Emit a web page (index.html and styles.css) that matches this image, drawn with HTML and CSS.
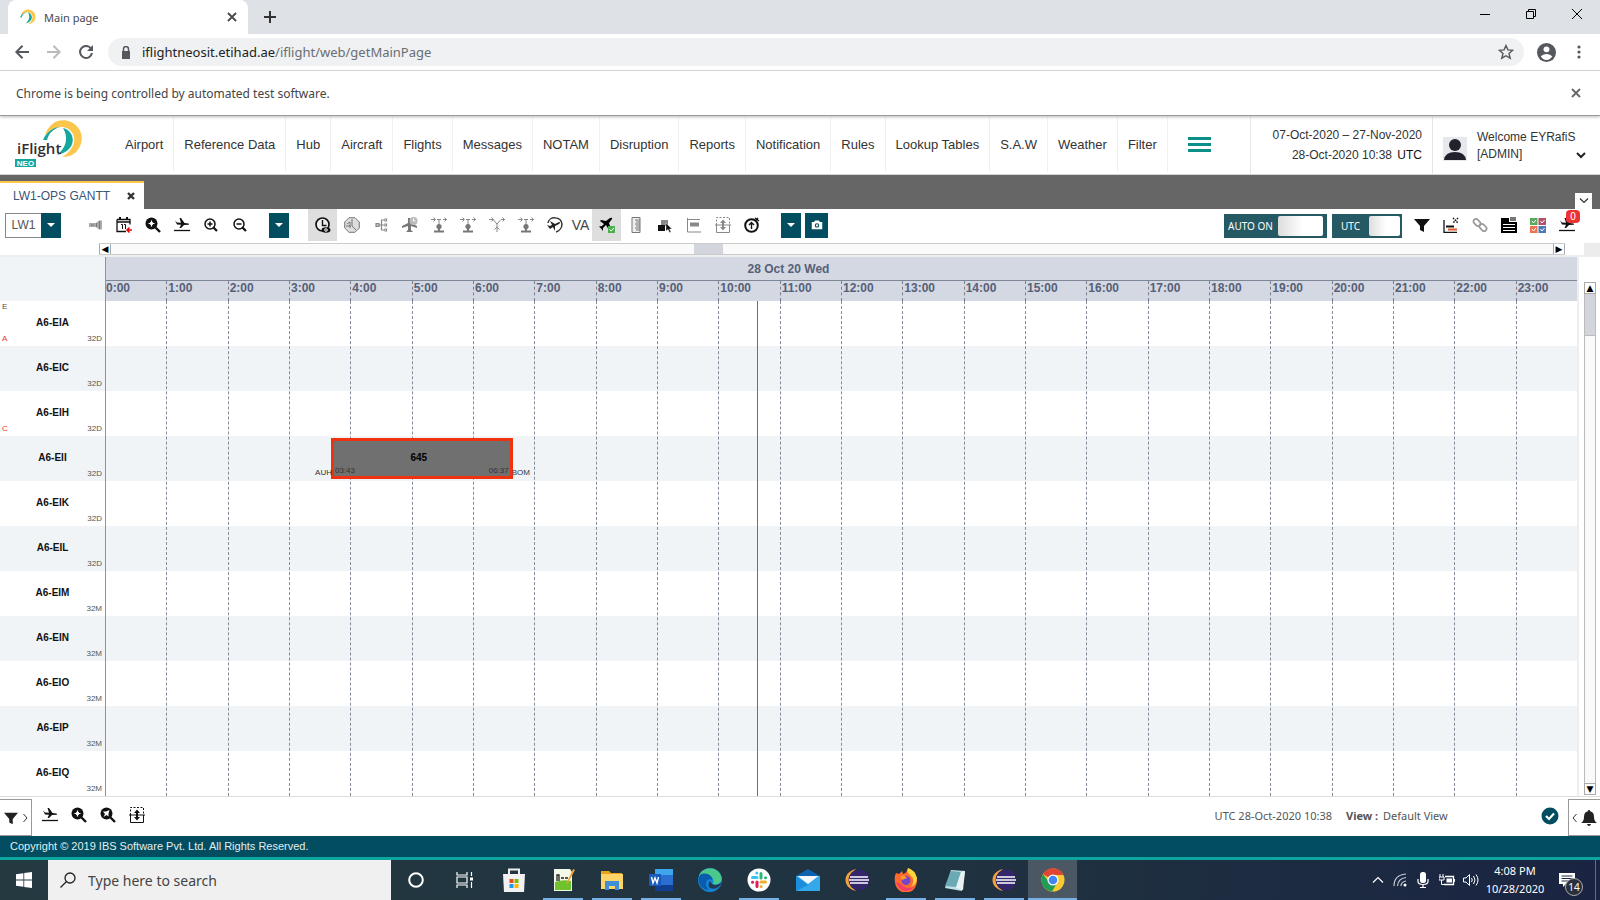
FILE: index.html
```html
<!DOCTYPE html>
<html lang="en">
<head>
<meta charset="utf-8">
<title>Main page</title>
<link rel="stylesheet" href="styles.css">
</head>
<body>
<svg class="defs" aria-hidden="true">
  <symbol id="swirl" viewBox="0 0 40 40"><path fill="#fbc64b" d="M2 17C5 4 17-2 28 3c13 6 14 22 4 31-4 3-9 4-13 4 9-5 15-15 11-23C25 6 12 5 2 17z"/><path fill="#14a79d" d="M0 21C4 12 11 8 17 8 10 10 6 14 4 21zM20 9c13 3 15 23-6 27 9-7 12-17 6-27z"/></symbol>
  <symbol id="x" viewBox="0 0 10 10"><path d="M1 1l8 8M9 1L1 9" fill="none" stroke="currentColor" stroke-width="1.8"/></symbol>
  <symbol id="caret" viewBox="0 0 10 6"><path d="M1 1h8L5 5z" fill="currentColor"/></symbol>
  <symbol id="chev" viewBox="0 0 10 7"><path d="M1 1l4 4 4-4" fill="none" stroke="currentColor" stroke-width="1.2"/></symbol>
  <symbol id="torch" viewBox="0 0 16 16"><path d="M2 6h7l3-2.500h3v9h-3L9 10H2z" fill="#aaa"/><path d="M9.500 6v4M4 8h3M12.500 4v8" stroke="#777" fill="none"/></symbol>
  <symbol id="cal" viewBox="0 0 16 16"><path d="M1 2.500h13v5M10 14.500H1v-12M1 5h13" fill="none" stroke="#111" stroke-width="1.300"/><path d="M4 0v3M11 0v3" stroke="#111" stroke-width="2"/><path d="M5 7.500h1.500V12M8 7.500h1.500V12" fill="none" stroke="#111"/><path d="M16 13h-5M13.500 10.500L11 13l2.500 2.500" fill="none" stroke="#e00" stroke-width="1.500"/></symbol>
  <symbol id="zoomp" viewBox="0 0 16 16"><circle cx="6.500" cy="6.500" r="6" fill="#111"/><path d="M10.500 10.500l4.500 4.500" stroke="#111" stroke-width="2.400"/><path d="M6.500 3.500v6M3.500 6.500h6" stroke="#fff" stroke-width="1.200"/><circle cx="6.500" cy="6.500" r="1.800" fill="#fff"/></symbol>
  <symbol id="zoomplane" viewBox="0 0 16 16"><circle cx="6.500" cy="6.500" r="6" fill="#111"/><path d="M10.500 10.500l4.500 4.500" stroke="#111" stroke-width="2.400"/><path d="M3 4.500h3L9.500 3 8.500 6.500v3L6.500 8l-3 2L5 7z" fill="#fff"/></symbol>
  <symbol id="takeoff" viewBox="0 0 16 16"><path d="M1 3.500l2 2 4 .3L5.500 1H7l3.500 5 4 .4q1.500.8 0 1.400L10 8l-3 3H5.500L7 7.700l-4-.2z" fill="#111"/><path d="M0 13.500h16" stroke="#111" stroke-width="1.300"/></symbol>
  <symbol id="zin" viewBox="0 0 16 16"><circle cx="7" cy="7" r="5" fill="none" stroke="#111" stroke-width="1.500"/><path d="M10.500 10.500L14 14" stroke="#111" stroke-width="2.200"/><path d="M7 4.500v5M4.500 7h5" stroke="#111" stroke-width="1.500"/></symbol>
  <symbol id="zout" viewBox="0 0 16 16"><circle cx="7" cy="7" r="5" fill="none" stroke="#111" stroke-width="1.500"/><path d="M10.500 10.500L14 14" stroke="#111" stroke-width="2.200"/><path d="M4.500 7h5" stroke="#111" stroke-width="1.500"/></symbol>
  <symbol id="clock" viewBox="0 0 16 16"><circle cx="7.500" cy="7.500" r="6.500" fill="#eee" stroke="#111" stroke-width="1.700"/><path d="M7.500 3v5.500h4" fill="none" stroke="#111" stroke-width="1.400"/><ellipse cx="11" cy="13" rx="4.500" ry="2.800" fill="#111"/><circle cx="11" cy="13" r="1.300" fill="none" stroke="#fff"/></symbol>
  <symbol id="octo" viewBox="0 0 16 16"><path d="M5 .7h6L15.300 5v6L11 15.300H5L.7 11V5z" fill="#ddd" stroke="#777"/><path d="M8 2v7l4 4M3 7l3-2v6M2 9h5" fill="none" stroke="#777"/></symbol>
  <symbol id="tree" viewBox="0 0 16 16"><path d="M3 8h6M12 3H8.500v10H12M8 8h4M11.500 2h2v2h-2M11.500 7h2v2h-2M11.500 12h2v2h-2M3 6.500h3v3H3z" fill="none" stroke="#888" stroke-width="1.200"/></symbol>
  <symbol id="planeclk" viewBox="0 0 16 16"><path d="M6 1h2l1 5 6 3v2l-6-2v4l2 2H4l2-2V9l-6 2V9l6-3z" fill="#777"/><circle cx="11.500" cy="4" r="4" fill="#bbb"/><path d="M11.500 1.500V4h2" fill="none" stroke="#fff"/></symbol>
  <symbol id="fork" viewBox="0 0 16 16"><path d="M0 2.500h4M2.500.5l2 2-2 2M6 2.500h4M12 2.500h4M13.500.5l2 2-2 2M8 3v5" fill="none" stroke="#888"/><circle cx="8" cy="9.500" r="2.600" fill="#777"/><path d="M7 10h2v3.500h4v2H3v-2h4z" fill="#777"/></symbol>
  <symbol id="fork2" viewBox="0 0 16 16"><path d="M0 2.500h4M2.500.5l2 2-2 2M12 2.500h4M13.500.5l2 2-2 2M4.500 3L8 7l3.500-4M8 7v8M5.500 12.500L8 10l2.500 2.500" fill="none" stroke="#888"/></symbol>
  <symbol id="roundplane" viewBox="0 0 16 16"><path d="M1 6C2-1 14-1 15 7c0 4-3 7-6 8" fill="none" stroke="#333" stroke-width="1.500"/><path d="M0 8l3 1 2-1-2-4 5 3 4-2q2 0 0 2l-4 2v5l-2-4-3 2z" fill="#222"/></symbol>
  <symbol id="planeok" viewBox="0 0 16 16"><path d="M2 3l5 1 4-3q3-1 2 1l-3 4 2 6-2 1-3-5-3 3v3l-1.500-2L0 9.500 3 9l2-2-4-3z" fill="#000"/><path d="M9 9h7v7H9z" fill="#4caf50"/><path d="M10.500 12.500l1.500 1.500 3-3" fill="none" stroke="#fff"/></symbol>
  <symbol id="ruler" viewBox="0 0 16 16"><path d="M4 .5h8v15H4zM7 3h5M8 5h4M7 7h5M8 9h4M7 11h5M8 13h4" fill="#eee" stroke="#777"/></symbol>
  <symbol id="cubes" viewBox="0 0 16 16"><path d="M4 3h7v6H4z" fill="#888"/><path d="M1 8h7v6H1z" fill="#111"/><path d="M9 6l6 6h-2.500l1.500 3-1.500.5L11 12.500 9 14z" fill="#111" stroke="#fff" stroke-width=".4"/></symbol>
  <symbol id="align" viewBox="0 0 16 16"><path d="M1.500 1v14H15M2 2.500h12" fill="none" stroke="#888"/><path d="M4 5.500h9v4H4z" fill="#888"/></symbol>
  <symbol id="expand" viewBox="0 0 16 16"><path d="M1.500 15.500h13M1.500 8v7.500M14.500 8v7.500M0 8h16" fill="none" stroke="currentColor"/><path d="M1.500 8V.5h13V8" fill="none" stroke="currentColor" stroke-dasharray="2 1.500"/><path d="M8 2.500L11 6H9v4h2l-3 3.500L5 10h2V6H5z" fill="currentColor"/></symbol>
  <symbol id="timer" viewBox="0 0 16 16"><circle cx="7.500" cy="8.500" r="6.300" fill="none" stroke="#111" stroke-width="2"/><path d="M7.500 12V5.500M5 8l2.500-2.500L10 8M11 1l4 3M12 3l2-2" fill="none" stroke="#111" stroke-width="1.400"/></symbol>
  <symbol id="camera" viewBox="0 0 16 14"><path d="M1 3h3l1.500-2h5L12 3h3v9.500H1z" fill="#fff"/><circle cx="8" cy="7.500" r="2.200" fill="none" stroke="#024d5f" stroke-width="1.500"/></symbol>
  <symbol id="funnel" viewBox="0 0 16 16"><path d="M0 2h16L10 9v6l-4-2V9z" fill="currentColor"/></symbol>
  <symbol id="chart" viewBox="0 0 16 16"><path d="M1 3v12.300H14" fill="none" stroke="#111" stroke-width="1.300"/><path d="M3 9.500h8" stroke="#111" stroke-width="2"/><path d="M5 12.500h9" stroke="#e2572b" stroke-width="2"/><path d="M10 1l5 5M15 1l-5 5" stroke="#111" stroke-dasharray="1.500 1" stroke-width="1.500"/></symbol>
  <symbol id="link" viewBox="0 0 16 16"><g fill="none" stroke="#999" stroke-width="1.700"><rect x="1" y="3" width="8" height="5" rx="2.500" transform="rotate(45 5 5.500)"/><rect x="7" y="8" width="8" height="5" rx="2.500" transform="rotate(45 11 10.500)"/></g></symbol>
  <symbol id="doc" viewBox="0 0 16 16"><path d="M0 1h8v4h8v11H0z" fill="#000"/><path d="M9 0h6v4H9z" fill="#777"/><path d="M2 7.500h12M2 10.500h12M2 13.500h12" stroke="#fff"/></symbol>
  <symbol id="four" viewBox="0 0 16 16"><path d="M0 1h7.500v7H0z" fill="#59a85c"/><path d="M8.500 1H16v7H8.500z" fill="#b5506a"/><path d="M0 9h7.500v7H0z" fill="#ec7352"/><path d="M8.500 9H16v7H8.500z" fill="#4e79b8"/><path d="M2 4l1.500 2L6 3M10.500 4L12 6l2.500-3M2 12l1.500 2L6 11M10.500 12l1.500 2 2.500-3" fill="none" stroke="#fff"/></symbol>
  <symbol id="eclipse" viewBox="0 0 24 24"><path d="M11 1C-3 4-3 20 11 23 3 17 3 7 11 1z" fill="#f2a23a"/><circle cx="14" cy="12" r="10.500" fill="#33266b"/><path d="M5 9h18M4 12h20M5 15h18" stroke="#fff" stroke-width="1.500"/></symbol>
</svg>

<header class="tabstrip">
  <div class="btab"><svg class="i16"><use href="#swirl"/></svg><span class="grow">Main page</span><button class="plain" aria-label="Close tab"><svg class="i10"><use href="#x"/></svg></button></div>
  <button class="plain newtab" aria-label="New tab"><svg class="i12" viewBox="0 0 12 12"><path d="M6 0v12M0 6h12" stroke="#333" stroke-width="2"/></svg></button>
  <div class="wincontrols">
    <button class="plain" aria-label="Minimize"><svg class="i10" viewBox="0 0 10 10"><path d="M0 5.500h10" stroke="#000"/></svg></button>
    <button class="plain" aria-label="Restore"><svg class="i10" viewBox="0 0 10 10"><path d="M.5 2.500h7v7h-7zM2.500 2.500v-2h7v7h-2" fill="none" stroke="#000"/></svg></button>
    <button class="plain" aria-label="Close"><svg class="i10" viewBox="0 0 10 10"><path d="M0 0l10 10M10 0L0 10" stroke="#000"/></svg></button>
  </div>
</header>
<div class="addressbar">
  <button class="plain" aria-label="Back"><svg class="i14" viewBox="0 0 14 14"><path d="M14 7H1M7.500.8L1.300 7l6.200 6.200" fill="none" stroke="#55585c" stroke-width="2"/></svg></button>
  <button class="plain" aria-label="Forward"><svg class="i14" viewBox="0 0 14 14"><path d="M0 7h13M6.500.8L12.700 7l-6.200 6.200" fill="none" stroke="#bbb" stroke-width="2"/></svg></button>
  <button class="plain" aria-label="Reload"><svg class="i14" viewBox="0 0 14 14"><path d="M12 3.500A6 6 0 1 0 13 8" fill="none" stroke="#55585c" stroke-width="2"/><path d="M14 0v6H8z" fill="#55585c"/></svg></button>
  <div class="pill">
    <svg class="lock" viewBox="0 0 10 13"><path d="M1 5h8v8H1z" fill="#55585c"/><path d="M2.500 5.500V3a2.500 2.500 0 0 1 5 0v2.500" fill="none" stroke="#55585c" stroke-width="1.500"/></svg>
    <span class="grow url"><b>iflightneosit.etihad.ae</b>/iflight/web/getMainPage</span>
    <button class="plain" aria-label="Bookmark"><svg class="i16" viewBox="0 0 16 16"><path d="M8 1.500l1.900 4.400 4.800.4L11 9.500l1.200 4.700L8 11.700l-4.200 2.500L5 9.500 1.300 6.300l4.800-.4z" fill="none" stroke="#55585c" stroke-width="1.400"/></svg></button>
  </div>
  <button class="plain" aria-label="Profile"><svg class="i18" viewBox="0 0 18 18"><circle cx="9" cy="9" r="9" fill="#55585c"/><circle cx="9" cy="6" r="2.800" fill="#fff"/><path d="M3.500 12.500q5.500-4 11 0-2 3.500-5.500 3.500t-5.500-3.500z" fill="#fff"/></svg></button>
  <button class="plain" aria-label="Menu"><svg class="dots" viewBox="0 0 4 14"><circle cx="2" cy="2" r="1.600" fill="#55585c"/><circle cx="2" cy="7" r="1.600" fill="#55585c"/><circle cx="2" cy="12" r="1.600" fill="#55585c"/></svg></button>
</div>
<div class="infobar"><span class="grow">Chrome is being controlled by automated test software.</span><button class="plain grey" aria-label="Dismiss"><svg class="i10"><use href="#x"/></svg></button></div>

<div class="apphead">
  <a class="logo" href="#" aria-label="iFlight NEO"><svg class="swirl"><use href="#swirl"/></svg><span class="brand">iFlight</span><span class="neo">NEO</span></a>
  <nav class="menu">
    <a href="#">Airport</a><a href="#">Reference Data</a><a href="#">Hub</a><a href="#">Aircraft</a><a href="#">Flights</a><a href="#">Messages</a><a href="#">NOTAM</a><a href="#">Disruption</a><a href="#">Reports</a><a href="#">Notification</a><a href="#">Rules</a><a href="#">Lookup Tables</a><a href="#">S.A.W</a><a href="#">Weather</a><a href="#">Filter</a>
  </nav>
  <button class="plain burger" aria-label="More"><svg viewBox="0 0 23 15"><path d="M0 1.500h23M0 7.500h23M0 13.500h23" stroke="#0d8f89" stroke-width="3"/></svg></button>
  <div class="dates"><span>07-Oct-2020 – 27-Nov-2020</span><span>28-Oct-2020 10:38 <b>UTC</b></span></div>
  <div class="user">
    <svg class="avatar" viewBox="0 0 24 24"><path d="M0 0h24v24H0z" fill="#e6e8ec"/><circle cx="12" cy="8" r="6" fill="#22222c"/><path d="M1 23q1-8 11-8t11 8z" fill="#22222c"/></svg>
    <span class="grow">Welcome EYRafiS<br>[ADMIN]</span>
    <svg class="userchev" viewBox="0 0 10 7"><path d="M1 1l4 4 4-4" fill="none" stroke="#222" stroke-width="2"/></svg>
  </div>
</div>
<div class="pagetabs">
  <div class="ptab"><span class="grow">LW1-OPS GANTT</span><button class="plain" aria-label="Close"><svg class="i8" viewBox="0 0 8 8"><path d="M1 1l6 6M7 1L1 7" stroke="#333" stroke-width="2.400"/></svg></button></div>
  <button class="plain tablist" aria-label="Tab list"><svg class="i10"><use href="#chev"/></svg></button>
</div>

<div class="tools">
  <div class="combo"><span>LW1</span><button class="drop" aria-label="Choose"><svg class="i10c"><use href="#caret"/></svg></button></div>
  <div class="group">
    <button class="tool" aria-label="Torch"><svg><use href="#torch"/></svg></button><button class="tool" aria-label="Calendar"><svg><use href="#cal"/></svg></button><button class="tool" aria-label="Find"><svg><use href="#zoomp"/></svg></button><button class="tool" aria-label="Flight"><svg><use href="#takeoff"/></svg></button><button class="tool" aria-label="Zoom in"><svg><use href="#zin"/></svg></button><button class="tool" aria-label="Zoom out"><svg><use href="#zout"/></svg></button>
  </div>
  <button class="drop mid" aria-label="Zoom options"><svg class="i10c"><use href="#caret"/></svg></button>
  <div class="group">
    <button class="tool on" aria-label="Time"><svg><use href="#clock"/></svg></button><button class="tool" aria-label="Delay"><svg><use href="#octo"/></svg></button><button class="tool" aria-label="Tree"><svg><use href="#tree"/></svg></button><button class="tool" aria-label="Aircraft time"><svg><use href="#planeclk"/></svg></button><button class="tool" aria-label="Crew"><svg><use href="#fork"/></svg></button><button class="tool" aria-label="Crew link"><svg><use href="#fork"/></svg></button><button class="tool" aria-label="Merge"><svg><use href="#fork2"/></svg></button><button class="tool" aria-label="Passenger"><svg><use href="#fork"/></svg></button><button class="tool" aria-label="Rotation"><svg><use href="#roundplane"/></svg></button><button class="tool va">VA</button><button class="tool on" aria-label="Check flight"><svg><use href="#planeok"/></svg></button><button class="tool" aria-label="Ruler"><svg><use href="#ruler"/></svg></button><button class="tool" aria-label="Blocks"><svg><use href="#cubes"/></svg></button><button class="tool" aria-label="Align"><svg><use href="#align"/></svg></button><button class="tool pale" aria-label="Row height"><svg><use href="#expand"/></svg></button><button class="tool" aria-label="Timer"><svg><use href="#timer"/></svg></button>
  </div>
  <button class="drop end" aria-label="Options"><svg class="i10c"><use href="#caret"/></svg></button>
  <button class="drop cam" aria-label="Snapshot"><svg class="i12"><use href="#camera"/></svg></button>
  <div class="grow"></div>
  <button class="switch auto"><span>AUTO ON</span><i></i></button>
  <button class="switch utc"><span>UTC</span><i></i></button>
  <div class="group">
    <button class="tool" aria-label="Filter"><svg><use href="#funnel"/></svg></button><button class="tool" aria-label="Chart"><svg><use href="#chart"/></svg></button><button class="tool" aria-label="Link"><svg><use href="#link"/></svg></button><button class="tool" aria-label="Report"><svg><use href="#doc"/></svg></button><button class="tool" aria-label="Legend"><svg><use href="#four"/></svg></button><button class="tool" aria-label="Alerts"><svg><use href="#takeoff"/></svg><span class="badge">0</span></button>
  </div>
</div>

<div class="hscroll"><div class="track"><span class="arrow">◀</span><div class="rail"><div class="thumb"></div></div><span class="arrow">▶</span></div><div class="corner"></div></div>

<main class="gantt">
  <div class="chart">
    <div class="ghead">
      <div class="gcorner"></div>
      <div class="scale">
        <div class="day">28 Oct 20 Wed</div>
        <div class="hours"><span>0:00</span><span>1:00</span><span>2:00</span><span>3:00</span><span>4:00</span><span>5:00</span><span>6:00</span><span>7:00</span><span>8:00</span><span>9:00</span><span>10:00</span><span>11:00</span><span>12:00</span><span>13:00</span><span>14:00</span><span>15:00</span><span>16:00</span><span>17:00</span><span>18:00</span><span>19:00</span><span>20:00</span><span>21:00</span><span>22:00</span><span>23:00</span></div>
      </div>
    </div>
    <div class="gbody">
      <div class="rows">
        <div class="row"><div class="ac"><small class="tl">E</small><small class="bl">A</small><b>A6-EIA</b><small class="br">32D</small></div></div>
        <div class="row"><div class="ac"><b>A6-EIC</b><small class="br">32D</small></div></div>
        <div class="row"><div class="ac"><small class="bl">C</small><b>A6-EIH</b><small class="br">32D</small></div></div>
        <div class="row"><div class="ac"><b>A6-EII</b><small class="br">32D</small></div></div>
        <div class="row"><div class="ac"><b>A6-EIK</b><small class="br">32D</small></div></div>
        <div class="row"><div class="ac"><b>A6-EIL</b><small class="br">32D</small></div></div>
        <div class="row"><div class="ac"><b>A6-EIM</b><small class="br">32M</small></div></div>
        <div class="row"><div class="ac"><b>A6-EIN</b><small class="br">32M</small></div></div>
        <div class="row"><div class="ac"><b>A6-EIO</b><small class="br">32M</small></div></div>
        <div class="row"><div class="ac"><b>A6-EIP</b><small class="br">32M</small></div></div>
        <div class="row"><div class="ac"><b>A6-EIQ</b><small class="br">32M</small></div></div>
      </div>
      <div class="plot">
        <div class="lines"><i></i><i></i><i></i><i></i><i></i><i></i><i></i><i></i><i></i><i></i><i></i><i></i><i></i><i></i><i></i><i></i><i></i><i></i><i></i><i></i><i></i><i></i><i></i><i></i></div>
        <div class="now" style="left:44.3%"></div>
        <div class="flight" style="left:15.35%;width:12.35%;top:27.7%"><small class="dep">AUH</small><small class="t1">03:43</small><b>645</b><small class="t2">06:37</small><small class="arr">BOM</small></div>
      </div>
    </div>
  </div>
  <div class="vscroll"><span class="arrow">▲</span><div class="vrail"><div class="vthumb"></div></div><span class="arrow">▼</span></div>
</main>

<div class="status">
  <button class="side left" aria-label="Filter panel"><svg class="i14"><use href="#funnel"/></svg><svg class="angle" viewBox="0 0 5 10"><path d="M.5 1L4 5 .5 9" fill="none" stroke="#333"/></svg></button>
  <div class="group"><button class="tool" aria-label="Flight"><svg><use href="#takeoff"/></svg></button><button class="tool" aria-label="Find"><svg><use href="#zoomp"/></svg></button><button class="tool" aria-label="Find aircraft"><svg><use href="#zoomplane"/></svg></button><button class="tool" aria-label="Row height"><svg><use href="#expand"/></svg></button></div>
  <div class="grow"></div>
  <span class="stamp">UTC 28-Oct-2020 10:38</span><span class="view"><b>View :</b> Default View</span>
  <svg class="ok" viewBox="0 0 18 18"><circle cx="9" cy="9" r="8.500" fill="#024d5f"/><path d="M5 9l3 3 5-5.500" fill="none" stroke="#fff" stroke-width="2.200"/></svg>
  <button class="side right" aria-label="Notifications"><svg class="angle" viewBox="0 0 5 10"><path d="M4.500 1L1 5l3.500 4" fill="none" stroke="#333"/></svg><svg class="i16" viewBox="0 0 16 16"><path d="M8 0q1.200 0 1.200 1.200Q13 2 13 7q0 4 3 6H0q3-2 3-6 0-5 3.800-5.800Q6.800 0 8 0zM6 14h4q-.5 2-2 2t-2-2z" fill="#222"/></svg></button>
</div>
<footer class="copy">Copyright © 2019 IBS Software Pvt. Ltd. All Rights Reserved.</footer>

<div class="taskbar">
  <button class="plain start" aria-label="Start"><svg class="i16" viewBox="0 0 16 16"><path d="M0 2.200L7.400 1.200v6.400H0zM8.200 1L16 0v7.600H8.200zM0 8.400h7.400v6.400L0 13.800zM8.200 8.400H16V16l-7.800-1z" fill="#fff"/></svg></button>
  <label class="search"><svg class="i16" viewBox="0 0 16 16"><circle cx="10" cy="6" r="5" fill="none" stroke="#222" stroke-width="1.300"/><path d="M6.500 9.500L.5 15.500" stroke="#222" stroke-width="1.300"/></svg><input type="text" placeholder="Type here to search" aria-label="Search"></label>
  <div class="apps">
    <button aria-label="Cortana"><svg viewBox="0 0 24 24"><circle cx="12" cy="12" r="6.800" fill="none" stroke="#fff" stroke-width="2"/></svg></button>
    <button aria-label="Task view"><svg viewBox="0 0 24 24"><path d="M4 4v3h10V4M4 20v-3h10v3M4 9h10v6H4zM18.500 4v4M18.500 14v6" fill="none" stroke="#fff" stroke-width="1.200"/><path d="M17 9.500h3v3h-3z" fill="#fff"/></svg></button>
    <button aria-label="Store"><svg viewBox="0 0 24 24"><path d="M7 7V1.500h10V7" fill="none" stroke="#eee" stroke-width="2"/><path d="M1 6h22l-1 18H2z" fill="#f2f2f2"/><path d="M7.500 11h4v4h-4z" fill="#e74c25"/><path d="M12.500 11h4v4h-4z" fill="#7fba00"/><path d="M7.500 16h4v4h-4z" fill="#1d9ae8"/><path d="M12.500 16h4v4h-4z" fill="#fbb900"/></svg></button>
    <button class="run" aria-label="Notepad++"><svg viewBox="0 0 24 24"><path d="M3 1h16l2 3v19H3z" fill="#f4f8e8"/><path d="M4 14q8-3 16-1v9H4z" fill="#6fc22c"/><path d="M6 13V7h2v6M10 10h3M14 10h3" fill="none" stroke="#222" stroke-width="1.300"/><path d="M22 1l2 1-7 13-2 1z" fill="#e9a32d"/></svg></button>
    <button class="run" aria-label="File Explorer"><svg viewBox="0 0 24 24"><path d="M1 3h8l2 2h11v4H1z" fill="#e8a51b"/><path d="M1 6h22v15H1z" fill="#fcd467"/><path d="M5 22v-9h14v9h-4v-4H9v4z" fill="#3f8fd8"/></svg></button>
    <button class="run" aria-label="Word"><svg viewBox="0 0 24 24"><path d="M6 1h18v22H6z" fill="#2a6fd0"/><path d="M6 1h18v6H6z" fill="#41a5ee"/><path d="M6 17h18v6H6z" fill="#103f91"/><path d="M0 6h12v12H0z" fill="#185abd"/><path d="M2.500 9L4 15l2-5 2 5 1.500-6" fill="none" stroke="#fff" stroke-width="1.400"/></svg></button>
    <button aria-label="Edge"><svg viewBox="0 0 24 24"><circle cx="12" cy="12" r="12" fill="#1584d6"/><path d="M1 8C4-2 20-3 23.500 9c1 6-4 8-9 7 3-4-1-9-6-9-3 0-6 0-7.500 1z" fill="#4bc98a"/><path d="M2 7C8 3 15 8 14 12c-5-3-9 4-3 10C3 22-2 14 2 7z" fill="#0b5cad"/><path d="M14 16q5 3 10-2-4 9-12 6-3-3 0-7z" fill="#213a4d"/></svg></button>
    <button class="run" aria-label="Slack"><svg viewBox="0 0 24 24"><circle cx="12" cy="12" r="11.500" fill="#fff"/><g fill="none" stroke-width="3" stroke-linecap="round"><path d="M5.500 9.500H10M9.800 5v.1" stroke="#36c5f0"/><path d="M14 5.500V10M18.500 9.800h.1" stroke="#2eb67d"/><path d="M18.500 14H14M14.200 18.500v.1" stroke="#ecb22e"/><path d="M10 18.500V14M5.500 14.200h.1" stroke="#e01e5a"/></g></svg></button>
    <button aria-label="Mail"><svg viewBox="0 0 24 24"><path d="M0 8l12-7 12 7v2H0z" fill="#0f62ad"/><path d="M0 8h24v15H0z" fill="#35a8ea"/><path d="M1.500 8h21L12 16z" fill="#f4f8fb"/><path d="M0 8l12 9-12 6z" fill="#1b8ddb"/></svg></button>
    <button aria-label="Eclipse"><svg><use href="#eclipse"/></svg></button>
    <button class="run" aria-label="Firefox"><svg viewBox="0 0 24 24"><path d="M2 5l3 1 3-3 1 3q4-1 5-6 9 4 9 13a11 11 0 0 1-22 1Q0 9 2 5z" fill="#ff6a2f"/><path d="M14 0q-2 4 2 7 6 5 1 12 6-3 6-9Q21 2 14 0z" fill="#ffd43a"/><path d="M2 14q2 7 9 9 6 0 9-4-9 3-13-3z" fill="#f03d69"/><circle cx="12" cy="12.500" r="4.500" fill="#7546c9"/><path d="M6 9q4-3 7 1l-5 2z" fill="#ff9a30"/></svg></button>
    <button class="run" aria-label="Notepad"><svg viewBox="0 0 24 24"><path d="M8 2l14 1-3 20L2 20z" fill="#bfe0e5"/><path d="M8 3l10 1-5 15-11-1z" fill="#6ba9b5"/><path d="M18 4l4-1-2 19-7-2z" fill="#e9f1f0"/></svg></button>
    <button class="run" aria-label="Eclipse workspace"><svg><use href="#eclipse"/></svg></button>
    <button class="run active" aria-label="Chrome"><svg viewBox="0 0 24 24"><circle cx="12" cy="12" r="11.500" fill="#f9c932"/><path d="M12 12L2 6.300A11.500 11.500 0 0 1 22.500 7H12z" fill="#df4534"/><path d="M2 6.300A11.500 11.500 0 0 0 11 23.500L16 15l-8-1z" fill="#1f9d55"/><circle cx="12" cy="12" r="5.500" fill="#fff"/><circle cx="12" cy="12" r="4.300" fill="#4285f4"/></svg></button>
  </div>
  <div class="grow"></div>
  <div class="tray">
    <svg class="i14" viewBox="0 0 14 14"><path d="M2 9.500l5-5 5 5" fill="none" stroke="#fff" stroke-width="1.200"/></svg>
    <svg class="i14" viewBox="0 0 14 14"><path d="M1 13Q1 2 13 1M4.500 13Q5 5.500 13 4.500M8 13q0-4 5-5" fill="none" stroke="#ccd" stroke-width="1.200"/><circle cx="12" cy="12" r="1.500" fill="#fff"/></svg>
    <svg class="i16" viewBox="0 0 16 16"><rect x="5" y="0" width="6" height="11" rx="2.500" fill="#fff"/><path d="M3 7v2.500q0 3 5 3t5-3V7M8 12v3M5 15.500h6" fill="none" stroke="#fff" stroke-width="1.200"/></svg>
    <svg class="i16" viewBox="0 0 16 16"><path d="M6 4.500h8.500v8H5M15.500 7v3" fill="none" stroke="#fff" stroke-width="1.300"/><path d="M7.500 6.500H13v4H7.500z" fill="#fff"/><path d="M1 2v3M4 2v3M0 5h5v3H0zM2.500 8v4.500H5" fill="none" stroke="#fff"/></svg>
    <svg class="i16" viewBox="0 0 16 16"><path d="M.5 6h2.500l3.500-3.500v11L3 10H.5z" fill="none" stroke="#fff"/><path d="M8.500 6q1.500 2 0 4M10.500 4q3 4 0 8M13 2.500q4 5.500 0 11" fill="none" stroke="#fff"/></svg>
  </div>
  <div class="time"><span>4:08 PM</span><span>10/28/2020</span></div>
  <button class="plain action" aria-label="Action center"><svg class="i16" viewBox="0 0 16 16"><path d="M0 1h16v11H7l-3 3v-3H0z" fill="#fff"/><path d="M2.500 4h11M2.500 6.500h11M2.500 9h11" stroke="#1c2840"/></svg><span class="count">14</span></button>
</div>
</body>
</html>
```

FILE: styles.css
```css
* { box-sizing: border-box; }
body { margin: 0; min-height: 100vh; display: flex; flex-direction: column; background: #fff; font: 12px "Liberation Sans", Arial, sans-serif; color: #333; }
button { font: inherit; color: inherit; border: 0; padding: 0; margin: 0; background: none; display: flex; align-items: center; justify-content: center; }
a { color: inherit; text-decoration: none; }
svg { display: block; flex: none; }
.defs { position: absolute; width: 0; height: 0; }
.grow { flex: 1; }
.i8 { width: 8px; height: 8px; }
.i10 { width: 10px; height: 10px; }
.i10c { width: 10px; height: 6px; }
.i12 { width: 12px; height: 12px; }
.i14 { width: 14px; height: 14px; }
.i16 { width: 16px; height: 16px; }
.i18 { width: 19px; height: 19px; }

.tabstrip { display: flex; height: 34px; background: #dee1e6; padding-left: 8px; font-family: "Noto Sans", sans-serif; }
.btab { display: flex; align-items: center; gap: 8px; width: 240px; padding: 0 11px 0 12px; background: #fff; border-radius: 8px 8px 0 0; color: #45494d; font-size: 11px; }
.newtab { width: 44px; }
.wincontrols { margin-left: auto; display: flex; height: 28px; }
.wincontrols button { width: 46px; }
.addressbar { display: flex; align-items: center; height: 37px; padding: 0 19px 0 15px; border-bottom: 1px solid #d8dadd; font-family: "Noto Sans", sans-serif; gap: 18px; }
.pill { flex: 1; display: flex; align-items: center; height: 28px; margin: 0 -5px 0 -3px; padding: 0 10px 0 13px; border-radius: 14px; background: #eff1f3; }
.pill + button { margin-right: 3px; }
.lock { width: 10px; height: 13px; margin-right: 11px; }
.url { font-size: 13px; color: #6a6e73; }
.url b { font-weight: 400; color: #222; }
.dots { width: 4px; height: 14px; }
.infobar { display: flex; align-items: center; height: 45px; padding: 0 19px 0 16px; border-bottom: 1px solid #999; box-shadow: 0 1px 3px #bbb; position: relative; z-index: 1; font: 12px "Noto Sans", sans-serif; color: #444; }
.grey { color: #666; }

.apphead { display: flex; height: 59px; border-bottom: 1px solid #d5d5d5; }
.logo { position: relative; width: 115px; }
.swirl { position: absolute; left: 43px; top: 3px; width: 40px; height: 40px; }
.brand { position: absolute; left: 17px; top: 20px; font: 600 15px "Open Sans", sans-serif; line-height: 24px; color: #332c33; }
.neo { position: absolute; left: 15px; top: 43px; width: 21px; height: 8px; background: #14a79d; color: #fff; font-size: 8px; font-weight: 700; line-height: 9px; text-align: center; }
.menu { display: flex; padding-bottom: 2px; font-size: 13px; }
.menu a { display: flex; align-items: center; padding: 0 10px; border-right: 1px solid #f0f0f0; white-space: nowrap; }
.burger { width: 63px; margin-right: auto; padding-bottom: 2px; }
.burger svg { width: 23px; height: 15px; }
.dates { display: flex; flex-direction: column; align-items: flex-end; padding: 9px 10px 0 0; width: 183px; border: solid #e6e6e6; border-width: 0 1px; line-height: 20px; }
.dates b { font-weight: 400; color: #111; margin-left: 2px; }
.user { display: flex; align-items: center; width: 167px; padding: 1px 14px 0 10px; line-height: 17px; }
.avatar { width: 24px; height: 24px; margin: 7px 10px 0 0; }
.userchev { width: 10px; height: 7px; margin-top: 19px; }

.pagetabs { display: flex; align-items: flex-end; justify-content: space-between; height: 34px; padding-right: 8px; background: #666; }
.ptab { display: flex; align-items: center; width: 144px; height: 28px; padding: 0 9px 0 13px; background: #fff; border-top: 2px solid #fbc64b; color: #3b5577; }
.tablist { width: 17px; height: 16px; background: #fff; }

.tools { display: flex; align-items: center; height: 34px; padding: 0 19px 2px 5px; }
.combo { display: flex; width: 56px; height: 25px; border: 1px solid #888; border-right: 0; margin-right: 19px; }
.combo span { flex: 1; text-align: center; line-height: 23px; color: #555; }
.combo .drop { margin: -1px 0; }
.drop { width: 20px; height: 25px; background: #024d5f; color: #fff; }
.mid { margin: 0 19px 0 15px; }
.end { margin: 0 4px 0 15px; }
.cam { width: 23px; }
.group { display: flex; align-self: stretch; }
.tool { position: relative; width: 29px; color: #111; }
.tool svg { width: 16px; height: 16px; }
.on { background: #dedede; }
.va { width: 23px; font-size: 14px; color: #444; }
.pale { color: #888; }
.switch { height: 24px; margin-top: 2px; padding: 2px 4px; background: #255964; color: #fff; font: 10px "Noto Sans", sans-serif; }
.switch span { flex: 1; text-align: left; }
.switch i { align-self: stretch; width: 45px; border-radius: 2px; background: linear-gradient(90deg, #ddd, #fff 55%); }
.auto { width: 103px; margin-right: 5px; }
.utc { width: 70px; margin-right: 5px; padding: 2px 2px 2px 9px; }
.utc i { width: 31px; }
.badge { position: absolute; right: 1px; top: 1px; width: 14px; height: 13px; border-radius: 4px; background: #ee3333; color: #fff; font-size: 10px; line-height: 13px; text-align: center; }

.hscroll { display: flex; height: 14px; padding-left: 99px; border-bottom: 2px solid #eceef0; }
.track { flex: 1; display: flex; margin-right: 19px; border: 1px solid #ccc; border-width: 1px 0; background: #fafafa; }
.rail { flex: 1; }
.thumb { width: 29px; height: 100%; margin-left: 40.4%; background: #d2d6dc; }
.arrow { width: 12px; height: 100%; border: solid #aaa; border-width: 0 1px; background: #fff; color: #000; font: 9px "DejaVu Sans", sans-serif; line-height: 10px; text-align: center; overflow: hidden; }
.corner { width: 16px; background: #ececec; }

.gantt { flex: 1; display: flex; }
.chart { flex: 1; display: flex; flex-direction: column; border-right: 2px solid #eee; }
.ghead { display: flex; height: 44px; color: #566078; font-weight: 700; }
.gcorner { width: 106px; background: #f0f4f7; border-right: 1px solid #8b93a0; }
.scale { flex: 1; background: #d4d8e2; }
.day { height: 24px; line-height: 24px; padding-right: 106px; border-bottom: 1px solid #7d8798; text-align: center; }
.hours { display: grid; grid-template-columns: repeat(24, minmax(0, 1fr)); margin-left: -1px; }
.hours span { height: 20px; line-height: 15px; padding-left: 1px; border-left: 1px dashed #767f8e; }
.hours span:first-child { border: 0; }
.gbody { flex: 1; display: flex; position: relative; }
.rows { flex: 1; display: flex; flex-direction: column; }
.row { flex: 1 0 45px; display: flex; }
.row:nth-child(even) { background: #f0f4f7; }
.ac { position: relative; width: 106px; display: flex; align-items: center; justify-content: center; padding-bottom: 2px; border-right: 1px solid #8b93a0; font-size: 10px; color: #111; }
small { position: absolute; font-size: 8px; line-height: 10px; color: #555; }
.tl { left: 2px; top: 1px; }
.bl { left: 2px; bottom: 2px; color: #e33; }
.br { right: 3px; bottom: 2px; }
.plot { position: absolute; left: 105px; right: 0; top: 0; bottom: 0; }
.lines { height: 100%; display: grid; grid-template-columns: repeat(24, minmax(0, 1fr)); }
.lines i { border-left: 1px dashed #858c99; }
.lines i:first-child { border: 0; }
.now { position: absolute; top: 0; bottom: 0; width: 1px; background: #e2403a; }
.flight { position: absolute; height: 41px; display: flex; align-items: center; justify-content: center; padding: 0 6px 2px 0; border: 3px solid #f03210; background: #707070; color: #000; font-size: 10px; }
.flight small { color: #333; }
.dep { right: 100%; bottom: -2px; margin-right: 2px; }
.arr { left: 100%; bottom: -2px; margin-left: 2px; }
.t1 { left: 1px; bottom: 0; }
.t2 { right: 1px; bottom: 0; }
.vscroll { width: 21px; padding: 25px 4px 1px 5px; display: flex; flex-direction: column; }
.vscroll .arrow { width: 12px; height: 12px; border: 1px solid #aaa; }
.vrail { flex: 1; border: solid #bbb; border-width: 0 1px; background: #fafafa; }
.vthumb { height: 42px; background: #d2d6dc; border-bottom: 1px solid #bbb; }

.status { display: flex; align-items: center; height: 40px; border-top: 1px solid #ddd; font-family: "Noto Sans", sans-serif; color: #555; }
.side { align-self: flex-end; height: 37px; width: 32px; gap: 4px; border: 1px solid #999; background: #fff; color: #222; }
.left { border-left: 0; gap: 5px; padding-left: 1px; }
.right { border-right: 0; margin-left: 9px; }
.angle { width: 5px; height: 10px; }
.status .group { padding: 0 0 4px 3px; }
.stamp { font-size: 11px; margin-right: 14px; padding-bottom: 2px; }
.view { font-size: 11px; width: 195px; padding-bottom: 2px; }
.view b { margin-right: 2px; }
.ok { width: 18px; height: 18px; margin-bottom: 2px; }
.copy { height: 24px; padding-left: 10px; background: #024d5f; border-bottom: 3px solid #0ca59f; color: #e3eef0; font-size: 11px; line-height: 20px; }

.taskbar { display: flex; height: 40px; background: linear-gradient(90deg, #243940, #1f3140 65%, #1a2442); color: #fff; font-family: "Noto Sans", sans-serif; }
.start { width: 48px; }
.search { display: flex; align-items: center; gap: 12px; width: 343px; padding-left: 12px; background: #f0f0f0; }
.search input { flex: 1; min-width: 0; border: 0; padding: 0; background: none; font: 14px "Noto Sans", sans-serif; }
.search input::placeholder { color: #444; opacity: 1; }
.apps { display: flex; }
.apps button { width: 49px; position: relative; }
.apps svg { width: 24px; height: 24px; }
.run::after { content: ""; position: absolute; left: 5px; right: 4px; bottom: 0; height: 2px; background: #76b0e6; }
.active { background: #4b5762; }
.active::after { left: 0; right: 0; }
.tray { display: flex; align-items: center; gap: 8px; }
.time { display: flex; flex-direction: column; justify-content: center; align-items: center; width: 72px; font-size: 11px; line-height: 18px; }
.action { position: relative; width: 45px; padding-right: 13px; border-right: 1px solid #66707c; margin-right: 4px; }
.count { position: absolute; left: 14px; top: 18px; width: 18px; height: 18px; border: 1px solid #aaa; border-radius: 9px; background: #2b2f3b; font-size: 10px; line-height: 16px; }
```
